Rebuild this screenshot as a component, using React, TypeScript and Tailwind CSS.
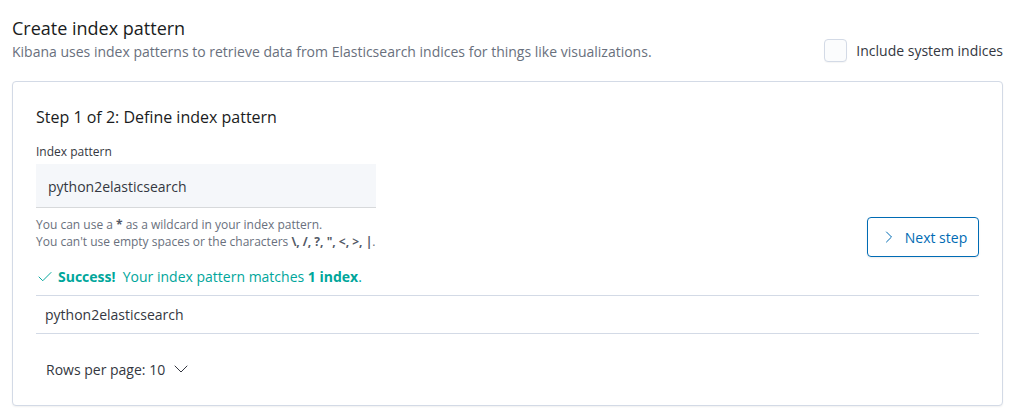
import { ChevronRight, ChevronDown, Check } from 'lucide-react'

/* ── Create index pattern (step 1) ───────────────────────────── */
export default function App() {
  return (
    <div className="w-[1015px] h-[415px] bg-white text-[#343741] font-['Open_Sans',sans-serif] overflow-hidden">
      <div className="px-3 pt-[14px]">
        {/* Header */}
        <div className="flex items-end justify-between">
          <div>
            <h1 className="text-[18px] leading-[28px] text-[#1a1c21]">Create index pattern</h1>
            <p className="text-[14px] leading-[20px] text-[#69707d]">
              Kibana uses index patterns to retrieve data from Elasticsearch indices for things like visualizations.
            </p>
          </div>
          <label className="flex items-center gap-[9px]">
            <span className="w-[23px] h-[23px] rounded-[4px] border border-[#d3dae6] bg-[#fbfcfd] shadow-[0_1px_1px_rgba(0,0,0,0.04)]" />
            <span className="text-[14px] leading-[20px] text-[#343741]">Include system indices</span>
          </label>
        </div>

        {/* Panel */}
        <div className="mt-[19px] h-[325px] rounded-[4px] border border-[#d3dae6] bg-white shadow-[0_1px_2px_rgba(0,0,0,0.06)] px-[23px] pt-[23px]">
          <h2 className="text-[16px] leading-[24px] text-[#1a1c21]">Step 1 of 2: Define index pattern</h2>

          <div className="mt-[14px] flex items-end justify-between">
            <div>
              <div className="text-[12px] leading-[18px] text-[#343741]">Index pattern</div>
              <div className="mt-[3px] w-[340px] h-[44px] bg-[#f5f7fa] shadow-[inset_0_-1px_0_rgba(0,0,0,0.12)] flex items-center px-[12px] text-[14px] text-[#343741]">
                python2elasticsearch
              </div>
              <div className="mt-[8px] text-[12px] leading-[17px] text-[#69707d]">
                <div>You can use a <b className="text-[#535966]">*</b> as a wildcard in your index pattern.</div>
                <div>
                  You can't use empty spaces or the characters <b className="text-[#535966]">\, /, ?, ", &lt;, &gt;, |</b>.
                </div>
              </div>
            </div>
            <button className="w-[112px] h-[40px] mb-[-7px] rounded-[4px] border border-[#006bb4] text-[#006bb4] text-[14px] flex items-center justify-center gap-[6px] shadow-[0_1px_2px_rgba(0,0,0,0.08)]">
              <ChevronRight size={20} strokeWidth={1.2} />
              Next step
            </button>
          </div>

          <div className="mt-[17px] flex items-center gap-[4px] text-[14px] leading-[20px] text-[#00a69b]">
            <Check size={18} strokeWidth={1.3} />
            <span><b className="font-bold">Success!</b>&nbsp; Your index pattern matches <b className="font-bold">1 index</b>.</span>
          </div>

          {/* Table */}
          <div className="mt-[8px] border-t border-b border-[#d3dae6] h-[39px] flex items-center px-[9px] text-[14px] text-[#343741]">
            python2elasticsearch
          </div>
          <div className="mt-[23px] ml-[10px] flex items-center gap-[4px] text-[14px] text-[#343741]">
            Rows per page: 10
            <ChevronDown size={24} strokeWidth={1} />
          </div>
        </div>
      </div>
    </div>
  )
}
